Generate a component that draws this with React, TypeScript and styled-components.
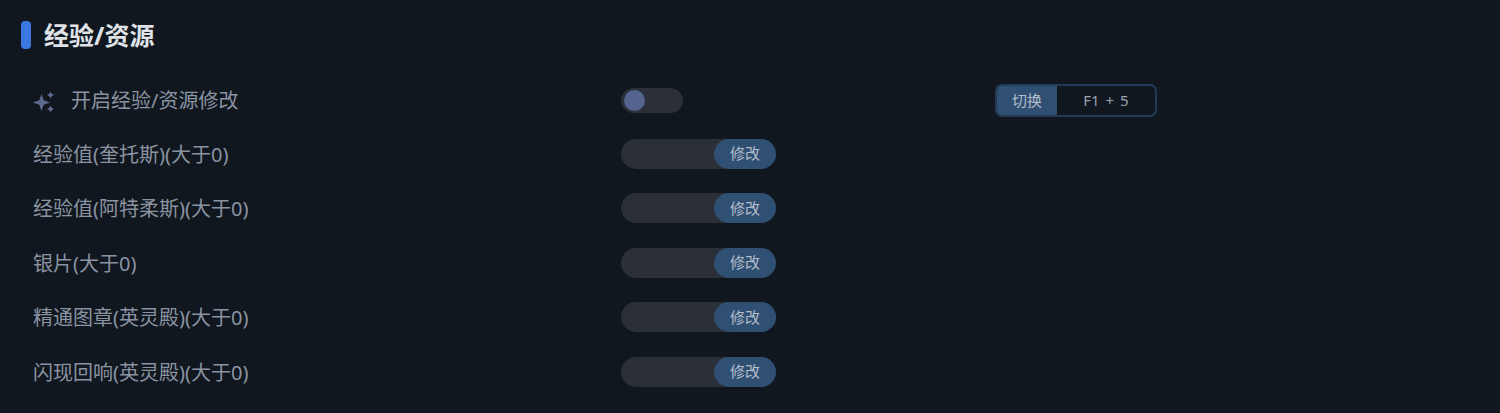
import styled, { createGlobalStyle } from "styled-components"

const GlobalStyle = createGlobalStyle`
  html, body {
    margin: 0;
    padding: 0;
    background: #11171e;
  }
`

const Page = styled.div`
  width: 1500px;
  height: 413px;
  overflow: hidden;
  background: #11171e;
  font-family: "Noto Sans", "Noto Sans CJK SC", sans-serif;
  padding: 21px 0 0 21px;
  box-sizing: border-box;
`

const Heading = styled.div`
  display: flex;
  align-items: center;
  gap: 13px;
  height: 28px;
  color: #dfe2e7;
  font-size: 25px;
  font-weight: 700;
  line-height: 28px;
`

const Accent = styled.span`
  width: 10px;
  height: 28px;
  border-radius: 4px;
  background: #3a77e0;
`

const Rows = styled.div`
  display: flex;
  flex-direction: column;
  gap: 24.5px;
  margin-top: 35px;
  padding-left: 12px;
`

const Row = styled.div`
  display: grid;
  grid-template-columns: 588px 374px auto;
  align-items: center;
  height: 30px;
`

const Label = styled.div`
  display: flex;
  align-items: center;
  gap: 16px;
  color: #8a93a2;
  font-size: 20px;
  line-height: 30px;
`

const FieldLabel = styled(Label)`
  padding-top: 2px;
  line-height: 28px;
`

const SparkleIcon = styled.svg`
  margin-top: 2px;
  fill: #5d6b91;
`

const Toggle = styled.div`
  display: flex;
  align-items: center;
  width: 62px;
  height: 25px;
  padding-left: 3px;
  box-sizing: border-box;
  border-radius: 13px;
  background: #2b2f38;
`

const Knob = styled.span`
  width: 21px;
  height: 21px;
  border-radius: 50%;
  background: #54648f;
`

const Field = styled.div`
  display: flex;
  justify-content: flex-end;
  width: 155px;
  height: 30px;
  border-radius: 15px;
  background: #2b2f38;
`

const ApplyButton = styled.button`
  width: 62px;
  height: 30px;
  padding: 0 0 2px;
  border: 0;
  border-radius: 15px;
  background: #2f4f73;
  color: #b4bdca;
  font-family: inherit;
  font-size: 15px;
`

const Hotkey = styled.div`
  display: flex;
  width: 162px;
  height: 33px;
  box-sizing: border-box;
  border: 2px solid #233a54;
  border-radius: 7px;
  overflow: hidden;
  font-size: 15px;
  line-height: 28px;
  color: #98a2b1;
  text-align: center;
`

const HotkeyAction = styled.span`
  width: 60px;
  background: #2f4f73;
  color: #b4bdca;
`

const HotkeyKeys = styled.span`
  flex: 1;
  word-spacing: 2px;
`

const Sparkle = () => (
  <SparkleIcon width="22" height="22" viewBox="0 0 22 22">
    <path d="M8.5 3 10.7 9.3 17 11.5 10.7 13.7 8.5 20 6.3 13.7 0 11.5 6.3 9.3Z" />
    <path d="M17.5 .5 18.7 2.8 21 4 18.7 5.2 17.5 7.5 16.3 5.2 14 4 16.3 2.8Z" />
    <path d="M17.5 14.5 18.7 16.8 21 18 18.7 19.2 17.5 21.5 16.3 19.2 14 18 16.3 16.8Z" />
  </SparkleIcon>
)

const resources = [
  "经验值(奎托斯)(大于0)",
  "经验值(阿特柔斯)(大于0)",
  "银片(大于0)",
  "精通图章(英灵殿)(大于0)",
  "闪现回响(英灵殿)(大于0)",
]

const App = () => (
  <>
    <GlobalStyle />
    <Page>
      <Heading>
        <Accent />
        经验/资源
      </Heading>
      <Rows>
        <Row>
          <Label>
            <Sparkle />
            开启经验/资源修改
          </Label>
          <Toggle>
            <Knob />
          </Toggle>
          <Hotkey>
            <HotkeyAction>切换</HotkeyAction>
            <HotkeyKeys>F1 + 5</HotkeyKeys>
          </Hotkey>
        </Row>
        {resources.map((name) => (
          <Row key={name}>
            <FieldLabel>{name}</FieldLabel>
            <Field>
              <ApplyButton>修改</ApplyButton>
            </Field>
          </Row>
        ))}
      </Rows>
    </Page>
  </>
)

export default App
